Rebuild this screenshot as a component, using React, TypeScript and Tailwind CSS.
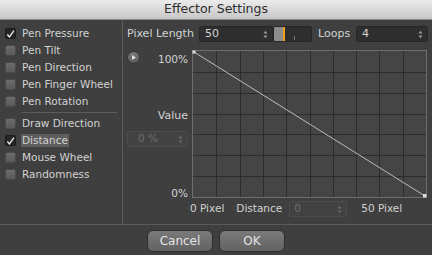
import React from 'react';

const leftItems1 = [
  { label: 'Pen Pressure', checked: true },
  { label: 'Pen Tilt' },
  { label: 'Pen Direction' },
  { label: 'Pen Finger Wheel' },
  { label: 'Pen Rotation' },
];

const leftItems2 = [
  { label: 'Draw Direction' },
  { label: 'Distance', checked: true, selected: true },
  { label: 'Mouse Wheel' },
  { label: 'Randomness' },
];

const CheckRow: React.FC<{ label: string; checked?: boolean; selected?: boolean }> = ({ label, checked, selected }) => (
  <div className="h-[17px] flex items-center pl-[5px]">
    {checked ? (
      <div className="w-[11px] h-[11px] rounded-[2px] bg-[#262626] border border-[#1a1a1a] flex items-center justify-center">
        <svg width="10" height="10" viewBox="0 0 10 10">
          <path d="M1.5 5.5 L3.8 8.3 L8.8 1.2" stroke="#e8e8e8" strokeWidth="1.5" fill="none" />
        </svg>
      </div>
    ) : (
      <div className="w-[11px] h-[11px] rounded-[2px] bg-gradient-to-b from-[#6c6c6c] to-[#5a5a5a] border border-[#4a4a4a]" />
    )}
    <span className={`ml-[5px] px-[1px] leading-[13px] ${selected ? 'bg-[#5e5e5e]' : ''}`}>{label}</span>
  </div>
);

const Spinner: React.FC<{ dim?: boolean }> = ({ dim }) => (
  <svg width="5" height="9" viewBox="0 0 5 9" className="ml-auto mr-[4px]">
    <path d="M0.5 3.5 L2.5 0.8 L4.5 3.5 Z M0.5 5.5 L2.5 8.2 L4.5 5.5 Z" fill={dim ? '#6a6a6a' : '#9a9a9a'} />
  </svg>
);

const Graph: React.FC = () => {
  const w = 233;
  const h = 146;
  const cols = 10;
  const rows = 7;
  return (
    <svg width={w + 2} height={h + 2} viewBox={`0 0 ${w + 2} ${h + 2}`}>
      <rect x="0.5" y="0.5" width={w + 1} height={h + 1} fill="#454545" stroke="#6e6e6e" />
      {Array.from({ length: cols - 1 }).map((_, i) => {
        const x = Math.round(1 + ((i + 1) * w) / cols) + 0.5;
        return <line key={`v${i}`} x1={x} y1={1} x2={x} y2={h + 1} stroke="#2c2c2c" />;
      })}
      {Array.from({ length: rows - 1 }).map((_, i) => {
        const y = Math.round(1 + ((i + 1) * h) / rows) + 0.5;
        return <line key={`h${i}`} x1={1} y1={y} x2={w + 1} y2={y} stroke="#2c2c2c" />;
      })}
      <line x1="2" y1="2" x2={w} y2={h} stroke="#bdbdbd" strokeWidth="1" />
      <rect x="0.5" y="0.5" width="3" height="3" fill="#dcdcdc" />
      <rect x={w - 2} y={h - 2} width="3.5" height="3.5" fill="#dcdcdc" />
    </svg>
  );
};

export default function App() {
  return (
    <div className="w-[432px] h-[255px] bg-[#3f3f3f] flex flex-col text-[#d2d2d2] text-[10.5px] font-['DejaVu_Sans',sans-serif] overflow-hidden">
      {/* Title bar */}
      <div className="h-[20px] shrink-0 bg-gradient-to-b from-[#ececec] to-[#c6c6c6] border-b border-[#8a8a8a] flex items-center justify-center text-[#2e2e2e] text-[12.5px]">
        Effector Settings
      </div>

      <div className="flex h-[205px] border-b border-[#5c5c5c]">
        {/* Left options */}
        <div className="w-[123px] shrink-0 border-r border-[#5c5c5c] pt-[5px]">
          {leftItems1.map(it => <CheckRow key={it.label} {...it} />)}
          <div className="ml-[22px] mr-[5px] my-[2px] h-px bg-[#5c5c5c]" />
          {leftItems2.map(it => <CheckRow key={it.label} {...it} />)}
        </div>

        {/* Right panel */}
        <div className="flex-1 pl-[4px] pt-[6px] pr-[4px]">
          <div className="flex items-center h-[16px]">
            <span className="w-[72px] text-[11px]">Pixel Length</span>
            <div className="w-[74px] h-[16px] bg-[#2e2e2e] border border-[#262626] rounded-[2px] flex items-center pl-[5px] text-[11px]">
              50
              <Spinner />
            </div>
            <div className="w-[39px] h-[16px] bg-[#2e2e2e] border border-[#262626] rounded-[2px] flex items-center relative overflow-hidden">
              <div className="w-[9px] h-full bg-[#8c8c8c]" />
              <div className="w-[2px] h-full bg-[#f0a020]" />
              <div className="ml-[9px] mt-[8px] w-px h-[4px] bg-[#777]" />
            </div>
            <span className="ml-[6px] w-[38px] text-[11px]">Loops</span>
            <div className="flex-1 h-[16px] bg-[#2e2e2e] border border-[#262626] rounded-[2px] flex items-center pl-[5px] text-[11px]">
              4
              <Spinner />
            </div>
          </div>

          <div className="flex mt-[8px]">
            <div className="w-[61px] h-[148px] flex flex-col">
              <div className="flex items-center justify-between h-[13px] mt-[1px]">
                <div className="w-[13px] h-[13px] rounded-full bg-gradient-to-b from-[#7a7a7a] to-[#5c5c5c] border border-[#333] flex items-center justify-center">
                  <svg width="4" height="5" viewBox="0 0 4 5">
                    <path d="M0 0 L4 2.5 L0 5 Z" fill="#dcdcdc" />
                  </svg>
                </div>
                <span className="mt-[5px]">100%</span>
              </div>
              <div className="text-right mt-[45px] leading-[13px] text-[11px]">Value</div>
              <div className="mt-[9px] h-[16px] bg-[#424242] border border-[#4c4c4c] rounded-[2px] flex items-center pl-[10px] text-[#6e6e6e]">
                0 %
                <Spinner dim />
              </div>
              <div className="text-right mt-auto leading-[13px] translate-y-[2px]">0%</div>
            </div>
            <div className="ml-[4px]">
              <Graph />
            </div>
          </div>

          <div className="flex items-center h-[16px] mt-[3px] ml-[63px]">
            <span>0 Pixel</span>
            <span className="ml-[12px]">Distance</span>
            <div className="ml-[7px] w-[58px] h-[16px] bg-[#424242] border border-[#4c4c4c] rounded-[2px] flex items-center pl-[4px] text-[#6e6e6e]">
              0
              <Spinner dim />
            </div>
            <span className="ml-[14px]">50 Pixel</span>
          </div>
        </div>
      </div>

      {/* Buttons */}
      <div className="flex-1 flex items-center justify-center gap-[6px] pt-[1px]">
        <button className="w-[66px] h-[22px] rounded-[6px] bg-gradient-to-b from-[#7a7a7a] to-[#626262] border border-[#2e2e2e] text-[#e4e4e4] text-[12px]">
          Cancel
        </button>
        <button className="w-[66px] h-[22px] rounded-[6px] bg-gradient-to-b from-[#7a7a7a] to-[#626262] border border-[#2e2e2e] text-[#e4e4e4] text-[12px]">
          OK
        </button>
      </div>
    </div>
  );
}
